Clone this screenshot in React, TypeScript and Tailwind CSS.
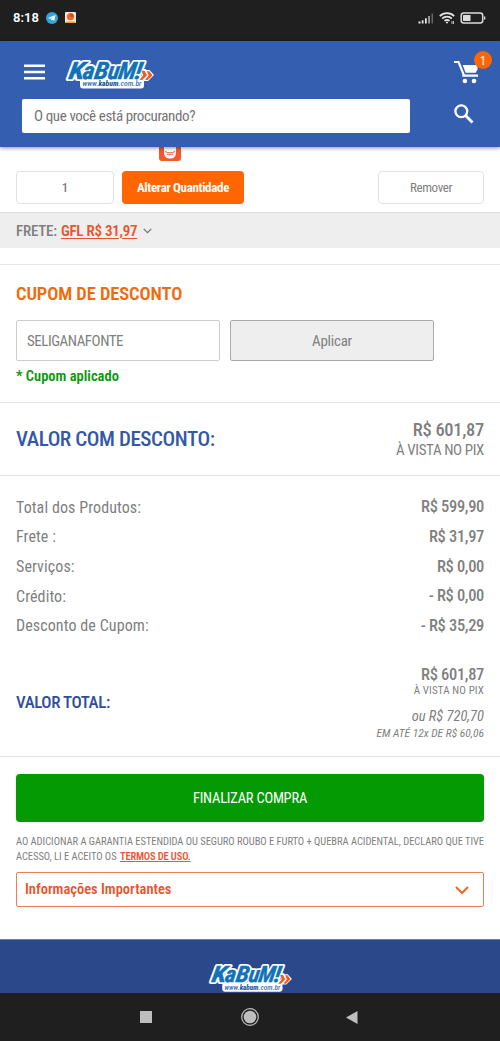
import React from 'react';

const totals = [
  { label: 'Total dos Produtos:', value: 'R$ 599,90' },
  { label: 'Frete :', value: 'R$ 31,97' },
  { label: 'Serviços:', value: 'R$ 0,00' },
  { label: 'Crédito:', value: '- R$ 0,00' },
  { label: 'Desconto de Cupom:', value: '- R$ 35,29' },
];

// x / width of each glyph on the logo baseline
const logoGlyphs = [
  { char: 'K', x: 2, width: 15.5 },
  { char: 'a', x: 16, width: 11.5 },
  { char: 'B', x: 27.5, width: 14 },
  { char: 'u', x: 41, width: 11.5 },
  { char: 'M', x: 51.5, width: 17.5 },
  { char: '!', x: 68, width: 7 },
];

function LogoWord() {
  return (
    <>
      {logoGlyphs.map(({ char, x, width }) => (
        <text key={char} x={x} y="21.500" textLength={width} lengthAdjust="spacingAndGlyphs">{char}</text>
      ))}
    </>
  );
}

function Logo({ className }: { className?: string }) {
  return (
    <svg viewBox="0 0 88 34" className={className} overflow="visible" fontFamily="Roboto, sans-serif">
      <rect x="14" y="21.5" width="64" height="10" rx="3" fill="#fff" />
      <path d="M75 12h4.500l1 1h3l4.500 5-6 6h-4l-1-1h-4l3-5z" fill="#fff" />
      <g transform="translate(3.500 0) skewX(-9)" fontWeight="700" fontStyle="italic" fontSize="24">
        <g stroke="#fff" strokeWidth="4" strokeLinejoin="round" fill="#fff">
          <LogoWord />
        </g>
        <g fill="#1272b8" stroke="#1272b8" strokeWidth=".4">
          <LogoWord />
        </g>
      </g>
      <path d="M75.500 13.800h3l2.500 4.400-4.800 4.800h-2.700l3.700-4.800zM80.800 14.200h2.500l3.200 4-4.800 4.800h-2.500l3.500-4.800z" fill="#f15a22" />
      <text x="16.500" y="29.300" fontSize="8" fontWeight="500" fontStyle="italic" fill="#3f6fb3" textLength="59" lengthAdjust="spacingAndGlyphs">
        www.<tspan fontWeight="800" fill="#1d55a0">kabum</tspan>.com.br
      </text>
    </svg>
  );
}

function StatusBar() {
  return (
    <div className="h-[41px] bg-[#1f1f1f] flex items-center px-[13px] pb-1.5">
      <span className="text-[13px] leading-none font-semibold text-white font-['Roboto',sans-serif] font-stretch-100% w-[33px]">8:18</span>
      <svg viewBox="0 0 12 12" className="w-3 h-3">
        <circle cx="6" cy="6" r="6" fill="#33a5dd" />
        <path d="M2 5.900 9.500 3 8.300 9 6.200 7.600 5.100 8.600 4.900 6.900 7.800 4.500 4.200 6.700z" fill="#fff" />
      </svg>
      <svg viewBox="0 0 11 11" className="w-[11px] h-[11px] ml-[7px]">
        <rect width="11" height="11" rx="1" fill="#f3e6da" />
        <path d="M1 9.500h9v1.500H1z" fill="#f0a020" />
        <circle cx="5.500" cy="4.700" r="3.600" fill="#ee6a1c" />
        <path d="M5.500 1.500a3 3 0 0 1 3 3L5.500 5z" fill="#d9421e" />
      </svg>
      <div className="ml-auto flex items-center">
        <svg viewBox="0 0 16 12" className="w-4 h-3 -mr-0.5">
          <path d="M.5 11.500V9.500h2v2zM3.800 11.500V8.200h1.700v3.300zM7 11.500V6.300h1.700v5.200z" fill="#eee" />
          <path d="M10.200 11.500V4h1.700v7.500z" fill="#aaa" />
          <path d="M13.500 11.500V1.500H15v10z" fill="#666" />
        </svg>
        <svg viewBox="0 0 16 12" className="w-4 h-3 ml-[7px]" fill="none" stroke="#e6e6e6" strokeWidth="1.700">
          <path d="M.8 4.200a10 10 0 0 1 14.400 0M3.200 6.700a6.700 6.700 0 0 1 9.600 0M5.500 9a3.600 3.600 0 0 1 5 0" />
          <circle cx="8" cy="10.500" r="1" fill="#e6e6e6" stroke="none" />
          <path d="M13 9v3M14.500 9v3" strokeWidth=".8" />
        </svg>
        <svg viewBox="0 0 26 12" className="w-[26px] h-3 ml-[5px] mr-px">
          <rect x="1.200" y="1" width="21.500" height="10" rx="2.500" fill="none" stroke="#ddd" strokeWidth="1.500" />
          <rect x="3" y="3" width="7.500" height="6" rx=".5" fill="#ddd" />
          <path d="M24 4.500h1.300v3H24z" fill="#ddd" />
        </svg>
      </div>
    </div>
  );
}

function Header() {
  return (
    <header className="relative z-10 h-[106px] bg-[#345eaf] shadow-[0_1px_4px_rgba(0,0,0,0.45)]">
      <div className="h-[57px] flex items-center pl-6 pr-5 pt-1">
        <svg viewBox="0 0 21 16" className="w-[21px] h-4 mt-px" fill="#fff">
          <path d="M0 .5h21V3H0zM0 6.700h21v2.500H0zM0 13h21v2.500H0z" />
        </svg>
        <Logo className="w-[88px] h-[34px] ml-[21px] mt-1" />
        <div className="relative ml-auto w-[26px] h-6">
          <svg viewBox="0 0 26 24" className="w-[26px] h-6" fill="#fff">
            <path d="M0 1h5.300l5.500 13.600H24v2.100H8.300V14L3.700 3.100H0z" />
            <path d="M8.700 5H23.500v4.500L21.700 12.800H11.600z" />
            <circle cx="10.900" cy="21" r="2.300" />
            <circle cx="20" cy="21" r="2.300" />
          </svg>
          <span className="absolute -top-[9px] left-5 w-[18px] h-[18px] rounded-full bg-[#ff6500] text-white text-[13px] leading-[19px] text-center">1</span>
        </div>
      </div>
      <div className="flex items-start pl-[22px] pr-[26px] pt-px">
        <div className="w-[388px] h-[34px] bg-white rounded-xs flex items-center pl-3 pt-px text-[15px] text-[#757575]">
          <span className="tracking-[-0.38px]">O que você está procurando?</span>
        </div>
        <svg viewBox="0 0 20 20" className="w-5 h-5 ml-auto mt-[5px]" fill="none" stroke="#fff">
          <circle cx="7.300" cy="7.300" r="5.900" strokeWidth="2.300" />
          <path d="M11.800 11.800 18.500 18.500" strokeWidth="2.900" />
        </svg>
      </div>
    </header>
  );
}

function ProductActions() {
  return (
    <section>
      <div className="h-[65px] px-4 flex flex-col">
        <svg viewBox="0 0 22 22" className="w-[22px] h-[22px] -mt-2 ml-[143px] shrink-0">
          <rect width="22" height="22" rx="3" fill="#f1592a" />
          <path d="M5 7h12v7c0 3-2 5-4 5.500H9C7 19 5 17 5 14z" fill="#fff" />
          <path d="M6 12.500c3 1.800 7 1.800 10 0M8 15c2 1 4 1 6 0" fill="none" stroke="#f1592a" strokeWidth="1" />
        </svg>
        <div className="flex mt-2.5 h-[33px] text-[13px]">
          <div className="w-[98px] border border-[#e2e2e2] rounded-[4px] flex items-center justify-center font-medium text-[#7f7f7f]">1</div>
          <button className="w-[122px] ml-2 rounded-[4px] bg-[#ff6500] text-white font-bold tracking-[-0.33px]">Alterar Quantidade</button>
          <button className="w-[106px] ml-auto border border-[#e2e2e2] rounded-[4px] text-[#808080] tracking-[-0.4px]">Remover</button>
        </div>
      </div>
      <div className="h-9 bg-[#eee] border-t border-[#ddd] px-4 pt-px flex items-center text-[15px] font-medium text-[#7f7f7f]">
        <span className="tracking-[-0.2px]">FRETE:</span>
        <span className="ml-1 text-[#e8552b] font-semibold tracking-[-0.26px] underline underline-offset-2 decoration-1">GFL R$ 31,97</span>
        <svg viewBox="0 0 9 6" className="w-[9px] h-1.5 ml-1.5" fill="none" stroke="#777" strokeWidth="1.300">
          <path d="M.7.9 4.500 4.700 8.300.9" />
        </svg>
      </div>
    </section>
  );
}

function Coupon() {
  return (
    <section className="mt-4 h-[138px] border-t border-[#e4e4e4] px-4">
      <h2 className="pt-[17px] text-[18.500px] leading-6 font-semibold tracking-[-0.1px] text-[#f26a0e]">CUPOM DE DESCONTO</h2>
      <div className="flex gap-2.5 mt-[14px] h-[41px] text-[15px] text-[#7f7f7f]">
        <div className="w-[204px] border border-[#ccc] rounded-xs flex items-center pl-2.5 pt-0.5 tracking-[-0.48px]">SELIGANAFONTE</div>
        <button className="w-[204px] border border-[#aaa] rounded-xs bg-[#eee] pt-0.5 tracking-[-0.25px]">Aplicar</button>
      </div>
      <p className="mt-1.5 text-[14.500px] leading-5 font-semibold text-[#0b960b]">* Cupom aplicado</p>
    </section>
  );
}

function Summary() {
  return (
    <>
      <section className="h-[73px] border-t border-[#e4e4e4] px-4 pt-0.5 flex items-center justify-between">
        <h2 className="text-[21px] font-medium tracking-[-0.42px] text-[#3358a8]">VALOR COM DESCONTO:</h2>
        <div className="text-right text-[#7f7f7f]">
          <p className="text-[18.500px] leading-5 font-medium tracking-[-0.3px]">R$ 601,87</p>
          <p className="text-[15px] leading-5 tracking-[-0.4px]">À VISTA NO PIX</p>
        </div>
      </section>
      <section className="h-[282px] border-t border-b border-[#e4e4e4] px-4 pt-[17px]">
        {totals.map(({ label, value }) => (
          <div key={label} className="flex justify-between h-[29.600px] items-center text-[#7f7f7f]">
            <span className="text-[16px] tracking-[0.1px]">{label}</span>
            <span className="text-[16.500px] font-medium tracking-[-0.33px]">{value}</span>
          </div>
        ))}
        <div className="flex justify-between items-center mt-6 text-[#7f7f7f]">
          <h2 className="text-[17px] font-medium tracking-[-0.42px] text-[#2f4d9e]">VALOR TOTAL:</h2>
          <div className="text-right">
            <p className="text-[16.500px] leading-[19px] font-medium tracking-[-0.33px]">R$ 601,87</p>
            <p className="text-[11px] leading-[14px] tracking-[0.12px]">À VISTA NO PIX</p>
            <p className="mt-[11px] text-[14.500px] leading-4 italic">ou R$ 720,70</p>
            <p className="text-[11.500px] leading-4 italic">EM ATÉ 12x DE R$ 60,06</p>
          </div>
        </div>
      </section>
    </>
  );
}

function Checkout() {
  return (
    <section className="px-4 pt-[17px] h-[182px]">
      <button className="w-full h-12 pt-0.5 rounded-[4px] bg-[#049a04] text-white text-[14.500px] tracking-[-0.22px] shadow-[0_0_3px_rgba(0,0,0,0.12)]">FINALIZAR COMPRA</button>
      <p className="mt-3 text-[10.500px] leading-[15px] tracking-[-0.04px] text-[#7f7f7f] whitespace-nowrap">
        AO ADICIONAR A GARANTIA ESTENDIDA OU SEGURO ROUBO E FURTO + QUEBRA ACIDENTAL, DECLARO QUE TIVE
        <br />
        ACESSO, LI E ACEITO OS <a className="ml-px font-semibold tracking-[-0.15px] text-[#ea5a2f] underline">TERMOS DE USO.</a>
      </p>
      <div className="mt-2 h-[35px] border border-[#ee7d58] rounded-xs flex items-center justify-between pl-2 pt-px pr-[14px]">
        <span className="text-[14.500px] font-semibold text-[#e8552b]">Informações Importantes</span>
        <svg viewBox="0 0 14 9" className="w-3.5 h-[9px]" fill="none" stroke="#f26522" strokeWidth="2">
          <path d="M1 1 7 7 13 1" />
        </svg>
      </div>
    </section>
  );
}

function NavBar() {
  return (
    <nav className="h-12 bg-[#1f1f1f] flex items-center justify-between pl-[140px] pr-[142px]">
      <svg viewBox="0 0 12 12" className="w-3 h-3"><path d="M0 0h12v12H0z" fill="#bebebe" /></svg>
      <svg viewBox="0 0 18 18" className="w-[18px] h-[18px] ml-px">
        <circle cx="9" cy="9" r="8.300" fill="none" stroke="#bebebe" strokeWidth="1.200" />
        <circle cx="9" cy="9" r="6.300" fill="#bebebe" />
      </svg>
      <svg viewBox="0 0 12 13" className="w-3 h-[13px]"><path d="M0 6.500 11.500 0v13z" fill="#bebebe" /></svg>
    </nav>
  );
}

export default function App() {
  return (
    <div className="w-[500px] h-[1041px] overflow-hidden bg-white font-['Roboto_Condensed','Roboto',sans-serif] font-stretch-75%">
      <StatusBar />
      <Header />
      <ProductActions />
      <Coupon />
      <Summary />
      <Checkout />
      <footer className="h-[54px] bg-[#2b488a] border-t border-[#6d80ad] flex justify-center pt-[22px]">
        <Logo className="w-[83px] h-8" />
      </footer>
      <NavBar />
    </div>
  );
}
